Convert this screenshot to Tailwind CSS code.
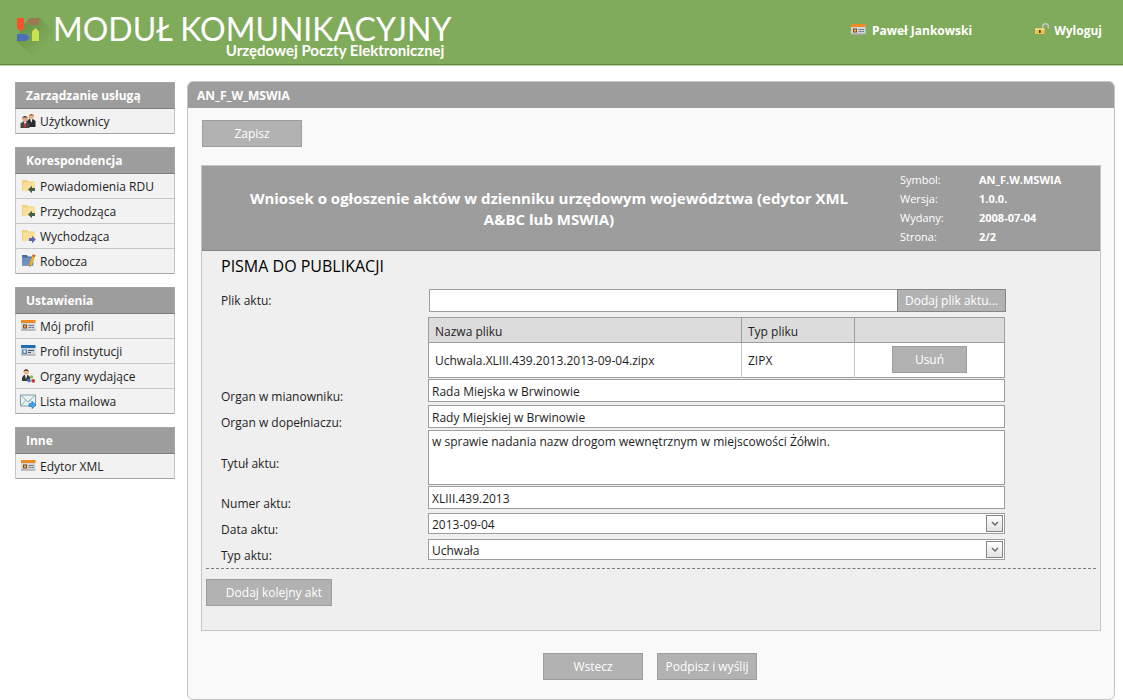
<!DOCTYPE html>
<html lang="pl">
<head>
<meta charset="utf-8">
<meta name="viewport" content="width=device-width, initial-scale=1">
<title>Moduł Komunikacyjny Urzędowej Poczty Elektronicznej</title>
<script src="https://cdn.jsdelivr.net/npm/@tailwindcss/browser@4"></script>
</head>
<body class="bg-white font-['Open_Sans','Noto_Sans',sans-serif] text-xs text-[#1e1e1e]">

<svg class="hidden" aria-hidden="true">
  <symbol id="i-users" viewBox="0 0 16 16">
    <path d="M6.500 14V8.500L9 6h4l2.500 2v6z" fill="#2b2b2e"/><path d="M10.200 6l1 4 1.300-4z" fill="#fff"/>
    <circle cx="11.300" cy="3.700" r="2.500" fill="#eab184"/><path d="M8.800 3.500C8.800 0 13.800 0 14 3.500l-1-1-3.400 0z" fill="#a5552b"/>
    <path d="M.5 15V10.500L3 8.500h4l2.500 2V15z" fill="#4b4442"/><path d="M4 8.500l1.200 5L6.300 8.500z" fill="#fff"/><path d="M4.900 10h.8l.3 4-.8 1-.8-1z" fill="#d32a2a"/>
    <circle cx="5" cy="6" r="2.600" fill="#e5a77b"/><path d="M2.200 6C1.800 2 8 1.800 7.800 6L7 4.600 3.200 4.600z" fill="#5a3423"/>
  </symbol>
  <symbol id="i-folder-g" viewBox="0 0 16 16">
    <path d="M2 2h5l1 1.500h6.500V12.500H2z" fill="#f1d078"/><path d="M3 4.500h12v8.500H3z" fill="#f8e09a"/>
    <path d="M8 11.500l4-3.700v2.200H15v3h-3v2.200z" fill="#44604a"/>
  </symbol>
  <symbol id="i-folder-b" viewBox="0 0 16 16">
    <path d="M2 2h5l1 1.500h6.500V12.500H2z" fill="#f1d078"/><path d="M3 4.500h12v8.500H3z" fill="#f8e09a"/>
    <path d="M15.800 11.500L12 7.800V10H9v3h3v2.200z" fill="#5b66b4"/>
  </symbol>
  <symbol id="i-draft" viewBox="0 0 16 16">
    <path d="M2 2h5l.8 1.500h5.500v9H2z" fill="#4c6a96"/><path d="M2 4.500h11V12.500H2z" fill="#6f8fbc"/>
    <path d="M12.800 1.500l2.700.8-3.800 9.800-2 1.600-.2-2.700z" fill="#f6b21b"/><path d="M12.800 1.500l2.700.8-.7 1.700-2.600-.8z" fill="#d8502a"/><path d="M9.500 12.100l.2 1.600 1-.8z" fill="#3a2a1a"/>
  </symbol>
  <symbol id="i-card-o" viewBox="0 0 16 16">
    <path d="M1 2h14.500v10.500H1z" fill="#d3d6da"/><path d="M1 2h14.500v3H1z" fill="#f08a24"/><path d="M1 11.500h14.500v1H1z" fill="#9b9b9b"/>
    <path d="M3 6.500h4V10.500H3z" fill="#7c4b1c"/><path d="M4 7.500h2v2H4z" fill="#f3b05a"/><path d="M8.500 7.500H14M8.500 9.500h3M12 9.500h2" stroke="#737b86"/>
  </symbol>
  <symbol id="i-card-b" viewBox="0 0 16 16">
    <path d="M1 2h14.500v10.500H1z" fill="#d3d6da"/><path d="M1 2h14.500v3H1z" fill="#1c6fb5"/><path d="M1 11.500h14.500v1H1z" fill="#9b9b9b"/>
    <path d="M2 6.500h5V11H2z" fill="#4c86bd"/><path d="M3.500 7.300h2v2.400h-2z" fill="#fff"/><path d="M8 7.500h6M8 9.500h3" stroke="#4f5560"/>
  </symbol>
  <symbol id="i-org" viewBox="0 0 16 16">
    <path d="M2 13V9.500L4 7h4l2 2v4z" fill="#35383f"/><path d="M5 7l1 4.500L7.200 7z" fill="#fff"/>
    <circle cx="6.200" cy="4.200" r="2.500" fill="#e8b58b"/><path d="M3.500 4.100C3.300.1 9 .3 8.800 4.100l-1-1.300H4.600z" fill="#2e2522"/>
    <circle cx="11.500" cy="9" r="1.800" fill="#8dbf4d"/><circle cx="9" cy="12.600" r="1.800" fill="#3f77bf"/><circle cx="13.200" cy="12.800" r="1.900" fill="#c5373e"/>
  </symbol>
  <symbol id="i-mail" viewBox="0 0 16 16">
    <path d="M.5 2h15v11H.5z" fill="#e9f3f2" stroke="#7ba0ad"/><path d="M.5 2L8 9l7.500-7M.5 13L6 7.300M15.500 13L10 7.300" fill="none" stroke="#86a8b2"/>
    <path d="M9 10.500h3V8.300l4 3.700-4 3.700v-2.200H9z" fill="#4aa5ea" stroke="#1d6cb3" stroke-width=".6"/>
  </symbol>
  <symbol id="i-lock" viewBox="0 0 16 16">
    <path d="M8.800 6.500V4.500a2.800 2.800 0 0 1 5.600 0v2" fill="none" stroke="#c3c5c0" stroke-width="1.600"/>
    <path d="M1 6.500h9.500v5.500H1z" fill="#f0c44c"/><path d="M1 6.500h9.500v1.300H1z" fill="#fbe295"/><path d="M5 8h1.700v3H5z" fill="#4d3c10"/>
  </symbol>
  <symbol id="i-chevron" viewBox="0 0 8 6">
    <path d="M1 1l3 3 3-3" fill="none" stroke="#6c6c6c" stroke-width="1.500"/>
  </symbol>
</svg>

<header class="flex h-[66px] items-start justify-between border-b border-[#b7cfa0] bg-[#80ab5a] pl-[14px] pr-[21px] text-white shadow-[inset_0_-1px_0_#5f8a3d]">
  <div class="flex">
    <svg class="mt-[14px] h-[46px] w-[39px] shrink-0" viewBox="0 0 39 46" aria-hidden="true">
      <defs><linearGradient id="sh" x1="0" y1="0" x2="1" y2="1"><stop offset=".2" stop-color="#55803a" stop-opacity=".5"/><stop offset=".75" stop-color="#55803a" stop-opacity="0"/></linearGradient></defs>
      <path d="M25 3L39 17 20 43 2 27 10 10z" fill="url(#sh)"/>
      <path d="M3 4h7v10l-3.500 3.500L3 14z" fill="#f4532d"/>
      <path d="M25 4v7H16l-3.500-3.500L16 4z" fill="#9c7853"/>
      <path d="M3 20h9l4 3.500-4 3.500H3z" fill="#4c6fb8"/>
      <path d="M21.500 14l3.500 3.500V27h-7v-9.500z" fill="#c9e04f"/>
    </svg>
    <div class="flex flex-col pt-[16px] font-[Lato,sans-serif]">
      <h1 class="text-[32px] leading-[26px] whitespace-nowrap">MODUŁ KOMUNIKACYJNY</h1>
      <p class="pr-[7px] text-right text-[15px] leading-4 font-bold">Urzędowej Poczty Elektronicznej</p>
    </div>
  </div>
  <nav class="flex gap-[62px] pt-[22px] font-bold leading-[18px]">
    <a href="#" class="flex gap-[6px]"><svg class="size-4"><use href="#i-card-o"/></svg>Paweł Jankowski</a>
    <a href="#" class="flex gap-1"><svg class="size-4"><use href="#i-lock"/></svg>Wyloguj</a>
  </nav>
</header>

<div class="flex items-start gap-3 pt-[15px] pr-2 pl-[15px]">
  <aside class="mt-px flex w-40 shrink-0 flex-col gap-[13px]">
    <section>
      <h2 class="h-[27px] border border-[#a5a5a5] border-b-[#7d7d7d] bg-[#9d9d9d] pl-[10px] leading-[26px] font-bold text-white">Zarządzanie usługą</h2>
      <ul class="border-x border-[#c6c6c6] bg-[#f2f2f2]">
        <li class="h-[25px] border-b border-[#a5a5a5]"><a href="#" class="flex h-full gap-1 pl-1 leading-[26px]"><svg class="mt-1 size-4"><use href="#i-users"/></svg>Użytkownicy</a></li>
      </ul>
    </section>
    <section>
      <h2 class="h-[27px] border border-[#a5a5a5] border-b-[#7d7d7d] bg-[#9d9d9d] pl-[10px] leading-[26px] font-bold text-white">Korespondencja</h2>
      <ul class="border-x border-[#c6c6c6] bg-[#f2f2f2]">
        <li class="h-[25px] border-b border-[#c6c6c6]"><a href="#" class="flex h-full gap-1 pl-1 leading-[26px]"><svg class="mt-1 size-4"><use href="#i-folder-g"/></svg>Powiadomienia RDU</a></li>
        <li class="h-[25px] border-b border-[#c6c6c6]"><a href="#" class="flex h-full gap-1 pl-1 leading-[26px]"><svg class="mt-1 size-4"><use href="#i-folder-g"/></svg>Przychodząca</a></li>
        <li class="h-[25px] border-b border-[#c6c6c6]"><a href="#" class="flex h-full gap-1 pl-1 leading-[26px]"><svg class="mt-1 size-4"><use href="#i-folder-b"/></svg>Wychodząca</a></li>
        <li class="h-[25px] border-b border-[#a5a5a5]"><a href="#" class="flex h-full gap-1 pl-1 leading-[26px]"><svg class="mt-1 size-4"><use href="#i-draft"/></svg>Robocza</a></li>
      </ul>
    </section>
    <section>
      <h2 class="h-[27px] border border-[#a5a5a5] border-b-[#7d7d7d] bg-[#9d9d9d] pl-[10px] leading-[26px] font-bold text-white">Ustawienia</h2>
      <ul class="border-x border-[#c6c6c6] bg-[#f2f2f2]">
        <li class="h-[25px] border-b border-[#c6c6c6]"><a href="#" class="flex h-full gap-1 pl-1 leading-[26px]"><svg class="mt-1 size-4"><use href="#i-card-o"/></svg>Mój profil</a></li>
        <li class="h-[25px] border-b border-[#c6c6c6]"><a href="#" class="flex h-full gap-1 pl-1 leading-[26px]"><svg class="mt-1 size-4"><use href="#i-card-b"/></svg>Profil instytucji</a></li>
        <li class="h-[25px] border-b border-[#c6c6c6]"><a href="#" class="flex h-full gap-1 pl-1 leading-[26px]"><svg class="mt-1 size-4"><use href="#i-org"/></svg>Organy wydające</a></li>
        <li class="h-[25px] border-b border-[#a5a5a5]"><a href="#" class="flex h-full gap-1 pl-1 leading-[26px]"><svg class="mt-1 size-4"><use href="#i-mail"/></svg>Lista mailowa</a></li>
      </ul>
    </section>
    <section>
      <h2 class="h-[27px] border border-[#a5a5a5] border-b-[#7d7d7d] bg-[#9d9d9d] pl-[10px] leading-[26px] font-bold text-white">Inne</h2>
      <ul class="border-x border-[#c6c6c6] bg-[#f2f2f2]">
        <li class="h-[25px] border-b border-[#a5a5a5]"><a href="#" class="flex h-full gap-1 pl-1 leading-[26px]"><svg class="mt-1 size-4"><use href="#i-card-o"/></svg>Edytor XML</a></li>
      </ul>
    </section>
  </aside>

  <main class="min-w-0 flex-1 overflow-hidden rounded-md border border-[#c6c6c6] bg-[#f9f9f9]">
    <h2 class="h-[26px] bg-[#9d9d9d] pl-[9px] leading-[27px] font-bold text-white">AN_F_W_MSWIA</h2>
    <form class="px-[13px] pt-3 pb-[19px]">
      <button type="button" class="ml-px block h-[27px] w-[100px] border border-[#9d9d9d] bg-[#b2b2b2] text-white">Zapisz</button>

      <section class="mt-[18px] border border-[#c6c6c6] bg-[#efefef] pb-6">
        <div class="flex items-center border-b border-[#858585] bg-[#9d9d9d] text-white">
          <h3 class="flex-1 px-10 pt-[2px] text-center text-[15px] leading-[21px] font-bold">Wniosek o ogłoszenie aktów w dzienniku urzędowym województwa (edytor XML A&amp;BC lub MSWIA)</h3>
          <dl class="grid w-[204px] shrink-0 grid-cols-[79px_1fr] pt-1 pb-1 pl-1 text-[11px] leading-[19px]">
            <dt>Symbol:</dt><dd class="font-bold">AN_F.W.MSWIA</dd>
            <dt>Wersja:</dt><dd class="font-bold">1.0.0.</dd>
            <dt>Wydany:</dt><dd class="font-bold">2008-07-04</dd>
            <dt>Strona:</dt><dd class="font-bold">2/2</dd>
          </dl>
        </div>

        <h4 class="pt-[5px] pl-[19px] text-base leading-5 text-black">PISMA DO PUBLIKACJI</h4>

        <div class="mt-[13px] grid grid-cols-[207px_1fr] pr-[95px] pl-[19px] leading-[15px]">
          <label for="plik" class="pt-1">Plik aktu:</label>
          <div class="ml-px -mr-px flex h-[23px]">
            <input id="plik" type="text" class="min-w-0 flex-1 border border-r-0 border-[#9d9d9d] bg-white px-[3px]">
            <button type="button" class="w-[109px] border border-[#858585] bg-[#b2b2b2] text-white">Dodaj plik aktu...</button>
          </div>

          <table class="col-start-2 mt-[5px] mb-px w-full table-fixed border-collapse border border-[#9d9d9d] bg-white text-left">
            <colgroup><col><col class="w-[113px]"><col class="w-[150px]"></colgroup>
            <thead>
              <tr class="h-[25px] bg-[#dcdcdc]">
                <th class="border border-[#9d9d9d] px-[6px] pt-[2px] font-normal">Nazwa pliku</th>
                <th class="border border-[#9d9d9d] px-[6px] pt-[2px] font-normal">Typ pliku</th>
                <th class="border border-[#9d9d9d]" aria-label="Akcje"></th>
              </tr>
            </thead>
            <tbody>
              <tr class="h-[35px]">
                <td class="border-r border-[#c6c6c6] px-[6px]">Uchwala.XLIII.439.2013.2013-09-04.zipx</td>
                <td class="border-r border-[#c6c6c6] px-[6px]">ZIPX</td>
                <td class="pb-[2px]"><button type="button" class="mx-auto block h-[27px] w-[75px] border border-[#9d9d9d] bg-[#b2b2b2] text-white">Usuń</button></td>
              </tr>
            </tbody>
          </table>

          <label for="mian" class="pt-[10px]">Organ w mianowniku:</label>
          <input id="mian" type="text" value="Rada Miejska w Brwinowie" class="mb-[3px] h-[23px] w-full border border-[#9d9d9d] bg-white px-[3px] pt-[2px]">

          <label for="dop" class="pt-[10px]">Organ w dopełniaczu:</label>
          <input id="dop" type="text" value="Rady Miejskiej w Brwinowie" class="mb-[2px] h-[23px] w-full border border-[#9d9d9d] bg-white px-[3px] pt-[2px]">

          <label for="tytul" class="self-center pt-[10px]">Tytuł aktu:</label>
          <textarea id="tytul" class="mb-px block h-[55px] w-full resize-none border border-[#9d9d9d] bg-white px-[3px] pt-[3px]">w sprawie nadania nazw drogom wewnętrznym w miejscowości Żółwin.</textarea>

          <label for="numer" class="pt-[10px]">Numer aktu:</label>
          <input id="numer" type="text" value="XLIII.439.2013" class="mb-1 h-[23px] w-full border border-[#9d9d9d] bg-white px-[3px] pt-[2px]">

          <label for="data" class="pt-[9px]">Data aktu:</label>
          <div class="mb-[5px] grid h-[21px] border border-[#9d9d9d] bg-white">
            <select id="data" class="col-start-1 row-start-1 w-full appearance-none px-[3px] pt-[2px]"><option>2013-09-04</option></select>
            <span class="pointer-events-none col-start-1 row-start-1 mr-px flex size-[17px] items-center justify-center self-center justify-self-end border border-[#858585] bg-linear-to-b from-white to-[#e2e2e2]"><svg class="h-[6px] w-2"><use href="#i-chevron"/></svg></span>
          </div>

          <label for="typ" class="pt-[9px]">Typ aktu:</label>
          <div class="mb-[5px] grid h-[21px] border border-[#9d9d9d] bg-white">
            <select id="typ" class="col-start-1 row-start-1 w-full appearance-none px-[3px] pt-[2px]"><option>Uchwała</option></select>
            <span class="pointer-events-none col-start-1 row-start-1 mr-px flex size-[17px] items-center justify-center self-center justify-self-end border border-[#858585] bg-linear-to-b from-white to-[#e2e2e2]"><svg class="h-[6px] w-2"><use href="#i-chevron"/></svg></span>
          </div>
        </div>

        <div class="mx-1 mt-[3px] border-t border-dashed border-[#7a7a7a] pt-[10px]">
          <button type="button" class="block h-[27px] w-[126px] border border-[#9d9d9d] bg-[#b2b2b2] pr-[9px] text-right text-white">Dodaj kolejny akt</button>
        </div>
      </section>

      <div class="mt-[22px] flex justify-center gap-[14px] pr-[2px]">
        <button type="button" class="h-[27px] w-[100px] border border-[#9d9d9d] bg-[#b2b2b2] text-white">Wstecz</button>
        <button type="button" class="h-[27px] w-[100px] border border-[#9d9d9d] bg-[#b2b2b2] text-white">Podpisz i wyślij</button>
      </div>
    </form>
  </main>
</div>
</body>
</html>
